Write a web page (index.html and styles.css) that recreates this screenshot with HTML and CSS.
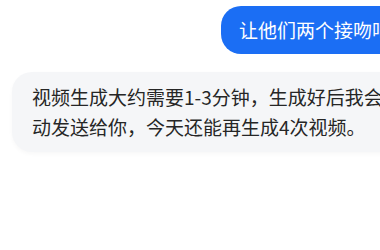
FILE: index.html
```html
<!DOCTYPE html>
<html lang="zh-CN">
<head>
<meta charset="utf-8">
<link rel="stylesheet" href="styles.css">
</head>
<body>
<div class="chat">
  <div class="msg msg-user">让他们两个接吻吧</div>
  <div class="msg msg-bot">视频生成大约需要1-3分钟，生成好后我会自动发送给你，今天还能再生成4次视频。</div>
</div>
</body>
</html>
```

FILE: styles.css
```css
html, body {
  margin: 0;
  padding: 0;
  background: #ffffff;
  overflow: hidden;
  width: 380px;
  height: 250px;
}

.chat {
  width: 397px;
  padding: 6px 0 0 12px;
  display: flex;
  flex-direction: column;
  gap: 18px;
  font-family: "Noto Sans CJK SC", "Noto Sans", sans-serif;
  font-size: 19px;
  line-height: 30px;
}

.msg {
  box-sizing: border-box;
}

.msg-user {
  align-self: flex-end;
  background: #1b6ef4;
  color: #ffffff;
  padding: 9px 18px;
  border-radius: 20px;
  white-space: nowrap;
}

.msg-bot {
  align-self: flex-start;
  width: 420px;
  flex-shrink: 0;
  background: #f5f6f8;
  color: #262626;
  padding: 10px 20px;
  border-radius: 20px;
  box-shadow: 0 2px 4px rgba(0, 0, 0, 0.03);
}
```
